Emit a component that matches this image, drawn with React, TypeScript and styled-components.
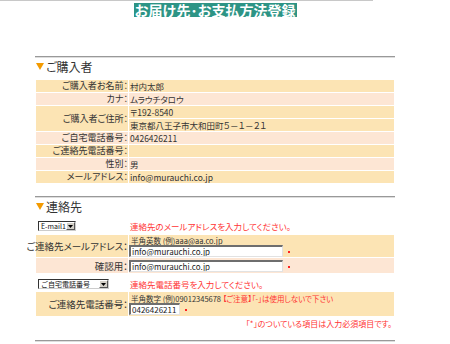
import React from 'react';
import styled, { createGlobalStyle } from 'styled-components';

const GlobalStyle = createGlobalStyle`
  html, body {
    margin: 0;
    padding: 0;
    background: #fff;
  }
  body {
    font-family: "Noto Sans CJK JP", "Liberation Sans", sans-serif;
    color: #333;
  }
`;

const TopShade = styled.div`
  width: 373px;
  height: 1px;
  background: #c8c8c8;
`;

const Wrapper = styled.div`
  width: 360px;
  margin-left: 35px;
`;

const TitleRow = styled.div`
  display: flex;
  justify-content: center;
  margin-top: 2px;
`;

const Title = styled.h1`
  margin: 0;
  padding: 0 1px;
  height: 14px;
  line-height: 14px;
  font-size: 14px;
  font-weight: bold;
  color: #fff;
  background: #2d9485;
  white-space: nowrap;
`;

const Rule = styled.hr<{ $gap: number }>`
  margin: ${p => p.$gap}px 0 0;
  height: 0;
  border: 0;
  border-top: 1px solid #999;
  border-bottom: 1px solid #ddd;
`;

const SectionHead = styled.h2`
  display: flex;
  align-items: center;
  gap: 2px;
  margin: 2px 0 0 1px;
  height: 13px;
  line-height: 13px;
  font-size: 12px;
  font-weight: normal;
  color: #333;
  font-feature-settings: "palt";
`;

const InfoGrid = styled.div<{ $top: number }>`
  display: grid;
  grid-template-columns: 92px 1fr;
  gap: 1px;
  padding: 1px;
  margin-top: ${p => p.$top}px;
  font-size: 9px;
  font-feature-settings: "palt";
`;

type Tone = 'y' | 'p';

const Cell = styled.div<{ $tone: Tone; $label?: boolean; $rows?: number; $h?: number }>`
  display: flex;
  flex-direction: column;
  justify-content: center;
  align-items: ${p => (p.$label ? 'flex-end' : 'flex-start')};
  min-height: ${p => p.$h ?? 12}px;
  padding-left: ${p => (p.$label ? 0 : 1)}px;
  line-height: 12px;
  font-size: ${p => (p.$label ? 9 : 8.5)}px;
  background: ${p => (p.$tone === 'y' ? '#fce4b4' : '#fde6d4')};
  grid-row: ${p => (p.$rows ? `span ${p.$rows}` : 'auto')};
  white-space: nowrap;
`;

const ContactLabel = styled.span`
  font-size: 9.5px;
`;

const Hint = styled.div`
  font-size: 7.5px;
  line-height: 9px;
  padding-left: 1px;
  color: #333;
`;

const Warn = styled.span`
  color: #ff3333;
`;

const FieldLine = styled.div`
  display: flex;
  align-items: center;
  gap: 5px;
  margin-left: -1px;
`;

const TextBox = styled.input<{ $w: number }>`
  box-sizing: border-box;
  width: ${p => p.$w}px;
  height: 12px;
  margin: 0;
  padding: 0 1px;
  font-family: "Noto Sans CJK JP", sans-serif;
  font-size: 8px;
  color: #222;
  background: #fff;
  border-top: 2px solid #6e6e6e;
  border-left: 2px solid #6e6e6e;
  border-right: 1px solid #e2e2e2;
  border-bottom: 1px solid #e2e2e2;
  outline: none;
`;

const Required = styled.span`
  width: 2px;
  height: 2px;
  margin-top: 3px;
  background: #ff2222;
`;

const PickRow = styled.div<{ $top: number }>`
  display: grid;
  grid-template-columns: 94px 1fr;
  align-items: center;
  height: 11px;
  margin-top: ${p => p.$top}px;
`;

const FakeSelect = styled.div<{ $w: number }>`
  box-sizing: border-box;
  display: flex;
  align-items: center;
  justify-content: space-between;
  width: ${p => p.$w}px;
  height: 10px;
  margin-left: 3px;
  padding-left: 2px;
  border: 1px solid #333;
  border-right-color: #ccc;
  border-bottom-color: #ccc;
  background: #fff;
  font-size: 7px;
  line-height: 8px;
  color: #111;
  white-space: nowrap;
  overflow: hidden;
`;

const DropBtn = styled.span`
  box-sizing: border-box;
  display: flex;
  flex: none;
  align-items: center;
  justify-content: center;
  width: 9px;
  height: 8px;
  background: #d4d0c8;
  border: 1px solid;
  border-color: #fff #555 #555 #fff;
`;

const PickNote = styled.div`
  color: #ff3333;
  font-size: 8.5px;
  padding-left: 1px;
  font-feature-settings: "palt";
  white-space: nowrap;
`;

const Footnote = styled.div`
  margin-top: 2px;
  padding-right: 3px;
  text-align: right;
  color: #ff3333;
  font-size: 8px;
  line-height: 9px;
  font-feature-settings: "palt";
`;

const Triangle = () => (
  <svg width="8" height="7" viewBox="0 0 8 7">
    <polygon points="0,0 8,0 4,7" fill="#f39a00" />
  </svg>
);

const Arrow = () => (
  <svg width="5" height="3" viewBox="0 0 5 3">
    <polygon points="0,0 5,0 2.5,3" fill="#000" />
  </svg>
);

const buyer: { label: string; value: string[]; tone: Tone }[] = [
  { label: 'ご購入者お名前：', value: ['村内太郎'], tone: 'y' },
  { label: 'カナ：', value: ['ムラウチタロウ'], tone: 'p' },
  { label: 'ご購入者ご住所：', value: ['〒192-8540', '東京都八王子市大和田町５－１－２１'], tone: 'y' },
  { label: 'ご自宅電話番号：', value: ['0426426211'], tone: 'p' },
  { label: 'ご連絡先電話番号：', value: [''], tone: 'y' },
  { label: '性別：', value: ['男'], tone: 'p' },
  { label: 'メールアドレス：', value: ['info@murauchi.co.jp'], tone: 'y' },
];

const App: React.FC = () => {
  return (
    <>
      <GlobalStyle />
      <TopShade />
      <Wrapper>
        <TitleRow>
          <Title>お届け先･お支払方法登録</Title>
        </TitleRow>

        <Rule $gap={39} />
        <SectionHead>
          <Triangle />
          ご購入者
        </SectionHead>

        <InfoGrid $top={6}>
          {buyer.map(row => (
            <React.Fragment key={row.label}>
              <Cell $tone={row.tone} $label $rows={row.value.length > 1 ? row.value.length : undefined}>
                {row.label}
              </Cell>
              {row.value.map((v, i) => (
                <Cell key={i} $tone={row.tone}>
                  {v}
                </Cell>
              ))}
            </React.Fragment>
          ))}
        </InfoGrid>

        <Rule $gap={12} />
        <SectionHead>
          <Triangle />
          連絡先
        </SectionHead>

        <PickRow $top={7}>
          <FakeSelect $w={38}>
            E-mail1
            <DropBtn>
              <Arrow />
            </DropBtn>
          </FakeSelect>
          <PickNote>連絡先のメールアドレスを入力してください。</PickNote>
        </PickRow>

        <InfoGrid $top={3}>
          <Cell $tone="y" $label $h={22}>
            <ContactLabel>ご連絡先メールアドレス：</ContactLabel>
          </Cell>
          <Cell $tone="y" $h={22}>
            <Hint>半角英数 (例)aaa@aa.co.jp</Hint>
            <FieldLine>
              <TextBox $w={154} readOnly value="info@murauchi.co.jp" />
              <Required />
            </FieldLine>
          </Cell>
          <Cell $tone="p" $label $h={15}>
            <ContactLabel>確認用：</ContactLabel>
          </Cell>
          <Cell $tone="p" $h={15}>
            <FieldLine>
              <TextBox $w={154} readOnly value="info@murauchi.co.jp" />
              <Required />
            </FieldLine>
          </Cell>
        </InfoGrid>

        <PickRow $top={4}>
          <FakeSelect $w={71}>
            ご自宅電話番号
            <DropBtn>
              <Arrow />
            </DropBtn>
          </FakeSelect>
          <PickNote>連絡先電話番号を入力してください。</PickNote>
        </PickRow>

        <InfoGrid $top={2}>
          <Cell $tone="y" $label $h={24}>
            <ContactLabel>ご連絡先電話番号：</ContactLabel>
          </Cell>
          <Cell $tone="y" $h={24}>
            <Hint>
              半角数字 (例)09012345678 <Warn>【ご注意】「-」は使用しないで下さい</Warn>
            </Hint>
            <FieldLine>
              <TextBox $w={51} readOnly value="0426426211" />
              <Required />
            </FieldLine>
          </Cell>
        </InfoGrid>

        <Footnote>「*」のついている項目は入力必須項目です。</Footnote>

        <Rule $gap={12} />
      </Wrapper>
    </>
  );
};

export default App;
